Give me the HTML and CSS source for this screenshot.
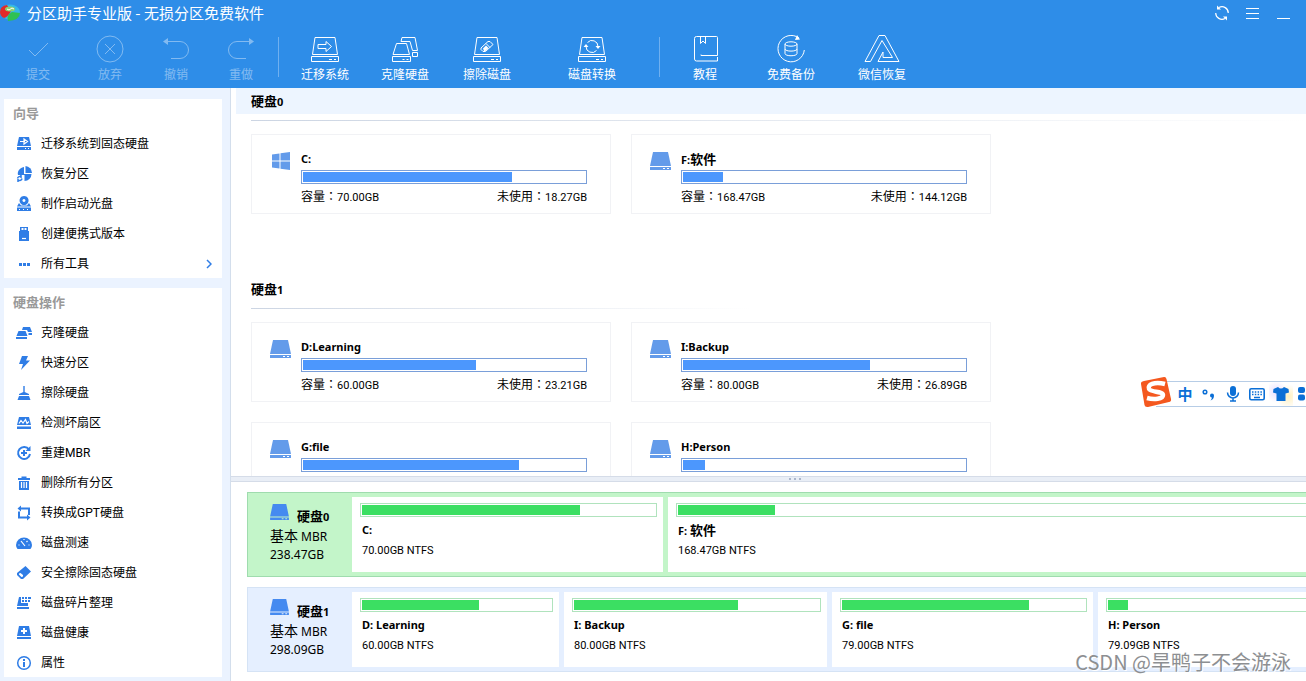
FILE: index.html
```html
<!DOCTYPE html>
<html lang="zh-CN">
<head>
<meta charset="utf-8">
<title>分区助手专业版 - 无损分区免费软件</title>
<link rel="stylesheet" href="styles.css">
</head>
<body>
<svg class="sprite" aria-hidden="true">
  <symbol id="drive" viewBox="0 0 21 19"><path d="M3 0h15l3 14H0z"/><path fill-rule="evenodd" d="M0 15h21v3H0zM13 16v1h2v-1zM17 16v1h2v-1z"/></symbol>
  <symbol id="drive-line" viewBox="0 0 28 28"><path d="M4 2.500H24L26.500 19.500H1.500zM.5 21.500H27.500V26.500H.5zM18 24.500h3M23 24.500h2"/></symbol>
</svg>

<div class="app">
  <header class="top">
    <div class="titlebar">
      <svg class="logo" width="20" height="18" viewBox="0 0 20 18"><ellipse cx="10" cy="8" rx="10" ry="7.500" fill="#35b8e8"/><path d="M0 8Q0 2 7 1L11 7Q8 13 4 14 0 12 0 8z" fill="#e02a2a"/><path d="M8 17Q6 11 12 8L20 9Q20 16 8 17z" fill="#2fc152"/><ellipse cx="10" cy="5" rx="5" ry="2.500" fill="#8fd16c"/><path d="M7 5l2 1 3-2 2 1" stroke="#fff" fill="none"/></svg>
      <h1>分区助手专业版 - 无损分区免费软件</h1>
      <div class="winctl">
        <button type="button" aria-label="刷新"><svg width="16" height="16" viewBox="0 0 16 16"><path d="M5 2.500A6.300 6.300 0 0 1 14.300 8M11 13.500A6.300 6.300 0 0 1 1.700 8" fill="none" stroke="#fff" stroke-width="1.200"/><path d="M3 .5v4h4zM13 15.500v-4H9z" fill="#fff"/></svg></button>
        <button type="button" aria-label="菜单"><svg width="14" height="14" viewBox="0 0 14 14"><path d="M0 2.500h13M0 7.500h13M0 12.500h13" stroke="#fff"/></svg></button>
        <button type="button" aria-label="最小化"><svg width="14" height="14" viewBox="0 0 14 14"><path d="M0 12.500h13" stroke="#fff"/></svg></button>
      </div>
    </div>
    <nav class="toolbar">
      <button type="button" disabled><svg viewBox="0 0 28 28"><path d="M5 15l6 6L24 8"/></svg>提交</button>
      <button type="button" disabled><svg viewBox="0 0 28 28"><circle cx="14" cy="14" r="13"/><path d="M9 9l10 10M19 9L9 19"/></svg>放弃</button>
      <button type="button" disabled><svg viewBox="0 0 28 28"><path d="M2 6.500H18a8.500 8.500 0 0 1 0 17H9"/><path class="solid" d="M1 6.500L6 3v7z"/></svg>撤销</button>
      <button type="button" disabled><svg viewBox="0 0 28 28"><path d="M26 6.500H10a8.500 8.500 0 0 0 0 17h9"/><path class="solid" d="M27 6.500L22 3v7z"/></svg>重做</button>
      <i class="sep"></i>
      <button type="button"><svg viewBox="0 0 28 28"><use href="#drive-line"/><path d="M7 9.500h8v-3l5.500 5-5.500 5v-3H7z"/></svg>迁移系统</button>
      <button type="button"><svg viewBox="0 0 28 28"><path d="M5.500 8.500H15.500L18.500 19.500H2zM1.500 21.500H19.500V26.500H1.500zM11.500 24.500h2M15.500 24.500h2M10 6.500L11 2.500H24L26.500 15.500H21.500L19 6.500H10M21.500 17.500h5v4h-5z"/></svg>克隆硬盘</button>
      <button type="button"><svg viewBox="0 0 28 28"><use href="#drive-line"/><path d="M8 13l7-6.500h2l3 3-7.500 7H10l-2-2zM13 8.500l4 4"/><path class="solid" d="M10 13.500l3-3 2.500 2.500-3 3H11z"/></svg>擦除磁盘</button>
      <button type="button"><svg viewBox="0 0 28 28"><use href="#drive-line"/><path d="M9.500 7.500a6 6 0 0 1 10.500 4M18.500 15.500a6 6 0 0 1-10.500-4"/><path class="solid" d="M17.500 11h5L20 14zM5.500 12h5L8 9z"/></svg>磁盘转换</button>
      <i class="sep"></i>
      <button type="button"><svg viewBox="0 0 28 28"><path d="M26.500 20.500V2.500a1 1 0 0 0-1-1H5.500a2 2 0 0 0-2 2V24a2 2 0 0 0 2 2H26.500V22M26.500 20.500H10v-1M9.500 1.500v7l2.500-2.500 2.500 2.500v-7"/></svg>教程</button>
      <button type="button"><svg viewBox="0 0 28 28"><path d="M22 3A13.200 13.200 0 1 0 27.300 15"/><path class="solid" d="M20 0l3 4.500-5 .5z"/><ellipse cx="14" cy="9" rx="6" ry="2.200"/><path d="M8 9v9.500c0 3 12 3 12 0V9M8 14c0 2.800 12 2.800 12 0"/></svg>免费备份</button>
      <button type="button"><svg class="wide" viewBox="0 0 36 28"><path d="M1 26.500L15 .5H21L35 26.500H14L19 17v5.500H28.500L18 5.500 6.500 26.500H1"/></svg>微信恢复</button>
    </nav>
  </header>

  <div class="body">
    <aside class="side">
      <section class="group">
        <h2>向导</h2>
        <ul>
          <li><button type="button"><svg viewBox="0 0 16 16"><path d="M3 1h10l2 9H1z"/><path d="M1 11h14v3H1z"/><path d="M4 5.500h5M8 3l3.500 2.500L8 8z" class="cut"/><path d="M9 12.500h1M12 12.500h1" class="cut"/></svg>迁移系统到固态硬盘</button></li>
          <li><button type="button"><svg viewBox="0 0 16 16"><path d="M8 1v7h7.500a7 7 0 0 1-7 7V9H2C1 6 3 2 8 1z"/><path d="M9.500 0A7 7 0 0 1 16 7H9.500z"/><path d="M1.500 12.500a2.500 2.500 0 0 1 4-1.500M6 12.500a2.500 2.500 0 0 1-4 1.500M5 9v3M2 16v-3" class="line"/></svg>恢复分区</button></li>
          <li><button type="button"><svg viewBox="0 0 16 16"><path fill-rule="evenodd" d="M8 0a4.500 4.500 0 1 0 .1 0zM8 3a1.500 1.500 0 1 1-.1 0z"/><path d="M3 7l2 2.500h6L13 7l2 3.500H1zM1 11.500h14V15H1z"/><path d="M3 13.500h1M7 13.500h1M11 13.500h1" class="cut"/></svg>制作启动光盘</button></li>
          <li><button type="button"><svg viewBox="0 0 16 16"><path d="M3 5h10v10H3z"/><path fill-rule="evenodd" d="M4 1h8v4H4zM5.500 2v2h2V2zM8.500 2v2h2V2z"/><path d="M6 12.500h4" class="cut"/></svg>创建便携式版本</button></li>
          <li><button type="button"><svg viewBox="0 0 16 16"><path d="M3 7h3v3H3zM7 7h3v3H7zM11 7h3v3h-3z"/></svg>所有工具<svg class="chev" viewBox="0 0 6 10"><path d="M1 1l4 4-4 4" class="line"/></svg></button></li>
        </ul>
      </section>
      <section class="group">
        <h2>硬盘操作</h2>
        <ul>
          <li><button type="button"><svg viewBox="0 0 16 16"><path d="M2.500 6h7l2 5H.5zM0 12h11v2H0zM7 2h7l2 5h-4L11 5H6zM12.500 8H16v2h-3.500z"/></svg>克隆硬盘</button></li>
          <li><button type="button"><svg viewBox="0 0 16 16"><path d="M6 1h6l-2 4.500h4L5 15l2-6H3z"/></svg>快速分区</button></li>
          <li><button type="button"><svg viewBox="0 0 16 16"><path d="M7.300 1h1.400v6l4.300 2v1H3V9l4.300-2zM3 11h10l1.500 4h-13z"/></svg>擦除硬盘</button></li>
          <li><button type="button"><svg viewBox="0 0 16 16"><path d="M3 2h10l2 8H1zM1 11.500h14V14H1z"/><path d="M3 8.500l2-3L7 8l2.500-3.500 1.500 4 2-2" class="cut"/></svg>检测坏扇区</button></li>
          <li><button type="button"><svg viewBox="0 0 16 16"><path d="M13 4.500A6 6 0 1 0 14 9M8 5v6M5 8h6" class="line bold"/><path d="M14.500 1v5h-5z"/></svg>重建MBR</button></li>
          <li><button type="button"><svg viewBox="0 0 16 16"><path d="M2 3h3.500V1.500h5V3H14v2H2zM3 6h10v9H3z"/><path d="M5.500 7v6M8 7v6M10.500 7v6" class="cut"/></svg>删除所有分区</button></li>
          <li><button type="button"><svg viewBox="0 0 16 16"><path d="M4 3.500h9V10M3 6.500V12.500h8" class="line bold"/><path d="M1.500 3.500L5 .5v6zM14.500 12.500L11 9.500v6z"/></svg>转换成GPT硬盘</button></li>
          <li><button type="button"><svg viewBox="0 0 16 16"><path d="M0 10a8 7.500 0 0 1 16 0q0 2.500-1.500 4h-13Q0 12.500 0 10z"/><path d="M5 6l4 5M2.500 10h1M12.500 10h1M8 4v1M11.500 6l-1 1" class="cut"/></svg>磁盘测速</button></li>
          <li><button type="button"><svg viewBox="0 0 16 16"><path fill-rule="evenodd" d="M9.500 1L15 6.500 7 14H5L1 10V8zM3 8.500v1L5.500 12 7 11.500V10L4.500 8z"/></svg>安全擦除固态硬盘</button></li>
          <li><button type="button"><svg viewBox="0 0 16 16"><path d="M3 2h2v6h7v3H1zM1 12h12v2H1zM6 2h2v2H6zM9 2h2v2H9zM12 2h3v2h-3zM6 5h2v2H6zM9 5h2v2H9zM12 5h2v2h-2z"/></svg>磁盘碎片整理</button></li>
          <li><button type="button"><svg viewBox="0 0 16 16"><path d="M3 1h10l2 10H1zM1 12h14v2H1z"/><path d="M8 3v6M5 6h6" class="cut thick"/></svg>磁盘健康</button></li>
          <li><button type="button"><svg viewBox="0 0 16 16"><circle cx="8" cy="8" r="6.300" class="line"/><path d="M7 4h2v2H7zM7 7h2v5H7z"/></svg>属性</button></li>
        </ul>
      </section>
    </aside>

    <main class="main">
      <div class="volumes">
        <section class="disk">
          <h2 class="band"><span class="zh">硬盘</span>0</h2>
          <div class="rule"></div>
          <div class="cards">
            <article class="card">
              <svg class="ico" viewBox="0 0 21 19"><path d="M2 2.500L9.500 1.500V8.500H2zM10.500 1.300L20 0V8.500H10.500zM2 9.500H9.500V16.500L2 15.500zM10.500 9.500H20V18L10.500 16.700z"/></svg>
              <div class="info"><h3>C:</h3><div class="meter"><span style="width:74%"></span></div><p><span><span class="zh">容量：</span>70.00GB</span><span><span class="zh">未使用：</span>18.27GB</span></p></div>
            </article>
            <article class="card">
              <svg class="ico"><use href="#drive"/></svg>
              <div class="info"><h3>F:<span class="zh">软件</span></h3><div class="meter"><span style="width:14.200%"></span></div><p><span><span class="zh">容量：</span>168.47GB</span><span><span class="zh">未使用：</span>144.12GB</span></p></div>
            </article>
          </div>
        </section>
        <section class="disk">
          <h2 class="name"><span class="zh">硬盘</span>1</h2>
          <div class="rule short"></div>
          <div class="cards">
            <article class="card">
              <svg class="ico"><use href="#drive"/></svg>
              <div class="info"><h3>D:Learning</h3><div class="meter"><span style="width:61.300%"></span></div><p><span><span class="zh">容量：</span>60.00GB</span><span><span class="zh">未使用：</span>23.21GB</span></p></div>
            </article>
            <article class="card">
              <svg class="ico"><use href="#drive"/></svg>
              <div class="info"><h3>I:Backup</h3><div class="meter"><span style="width:66.400%"></span></div><p><span><span class="zh">容量：</span>80.00GB</span><span><span class="zh">未使用：</span>26.89GB</span></p></div>
            </article>
            <article class="card">
              <svg class="ico"><use href="#drive"/></svg>
              <div class="info"><h3>G:file</h3><div class="meter"><span style="width:76.700%"></span></div></div>
            </article>
            <article class="card">
              <svg class="ico"><use href="#drive"/></svg>
              <div class="info"><h3>H:Person</h3><div class="meter"><span style="width:7.800%"></span></div></div>
            </article>
          </div>
        </section>
      </div>

      <div class="splitter"><i></i><i></i><i></i></div>

      <div class="maps">
        <section class="map selected">
          <div class="head"><h3><svg><use href="#drive"/></svg><span><span class="zh">硬盘</span>0</span></h3><p><span class="zh">基本</span> MBR</p><p>238.47GB</p></div>
          <div class="part" style="flex-grow:297"><div class="meter green"><span style="width:74.400%"></span></div><h4>C:</h4><p>70.00GB NTFS</p></div>
          <div class="part" style="flex-grow:677"><div class="meter green"><span style="width:14.400%"></span></div><h4>F: <span class="zh">软件</span></h4><p>168.47GB NTFS</p></div>
        </section>
        <section class="map">
          <div class="head"><h3><svg><use href="#drive"/></svg><span><span class="zh">硬盘</span>1</span></h3><p><span class="zh">基本</span> MBR</p><p>298.09GB</p></div>
          <div class="part" style="flex-grow:193"><div class="meter green"><span style="width:61.900%"></span></div><h4>D: Learning</h4><p>60.00GB NTFS</p></div>
          <div class="part" style="flex-grow:249"><div class="meter green"><span style="width:66.900%"></span></div><h4>I: Backup</h4><p>80.00GB NTFS</p></div>
          <div class="part" style="flex-grow:247"><div class="meter green"><span style="width:77%"></span></div><h4>G: file</h4><p>79.00GB NTFS</p></div>
          <div class="part" style="flex-grow:247"><div class="meter green"><span style="width:8.200%"></span></div><h4>H: Person</h4><p>79.09GB NTFS</p></div>
        </section>
      </div>
    </main>
  </div>

  <div class="ime">
    <svg class="ime-logo" width="32" height="32" viewBox="0 0 32 32"><path d="M4 5L24 1q2-.3 2.500 2L31 23q.5 2.500-2 3L8 31q-3 .5-3.500-2L1 8Q.5 5.500 4 5z" fill="#f4581f"/><path d="M25 8C14 5 7 9 9 13c2 3.500 14 2 14 6 0 4-9 5-16 3" fill="none" stroke="#fff" stroke-width="4.500"/></svg>
    <button type="button">中</button>
    <button type="button" aria-label="标点"><svg width="16" height="16" viewBox="0 0 16 16"><circle cx="4" cy="6" r="1.800" fill="none" stroke="#0b6fd6" stroke-width="1.500"/><path d="M9 9.500a2 2 0 1 1 4 0q0 4-3.500 5 1.500-1.500 1.300-3Q9 11.500 9 9.500z"/></svg></button>
    <button type="button" aria-label="语音"><svg width="16" height="16" viewBox="0 0 16 16"><rect x="5" width="6" height="10" rx="3"/><path d="M2.500 6.500a5.500 5.500 0 0 0 11 0M8 12v3M5 15h6" fill="none" stroke="#0b6fd6" stroke-width="1.500"/></svg></button>
    <button type="button" aria-label="键盘"><svg width="16" height="16" viewBox="0 0 16 16"><rect x=".8" y="2.800" width="14.400" height="11" rx="1.500" fill="none" stroke="#0b6fd6" stroke-width="1.600"/><path d="M3 6h10M3 8.500h10" stroke="#0b6fd6" stroke-width="1.600" stroke-dasharray="1.500 1.300"/><path d="M5 11.500h6" stroke="#0b6fd6" stroke-width="1.500"/></svg></button>
    <button type="button" class="skin" aria-label="皮肤"><svg width="16" height="16" viewBox="0 0 16 16"><path d="M5 1q3 3 6 0l4.500 2L16 6.500l-3.500 1V15h-9V7.500L0 6.500.5 3z"/></svg></button>
    <button type="button" aria-label="工具箱"><svg width="16" height="16" viewBox="0 0 16 16"><rect y="1" width="7" height="6" rx="2"/><rect y="8.500" width="7" height="6" rx="2"/><rect x="9" y="1" width="7" height="6" rx="2"/></svg></button>
  </div>
  <div class="watermark">CSDN @旱鸭子不会游泳</div>
</div>
</body>
</html>
```
FILE: styles.css
```css
* { box-sizing: border-box; margin: 0; padding: 0; }
body {
  font: 11px/16px "Noto Sans", "Noto Sans CJK SC", sans-serif;
  color: #000;
  background: #fff;
}
button { font: inherit; color: inherit; background: none; border: 0; }
ul { list-style: none; }
h1, h2, h3, h4 { font-size: inherit; }
.sprite { display: none; }
.zh { font-family: "Noto Sans CJK TC", "Noto Sans CJK SC", sans-serif; font-size: 12px; -webkit-locale: "zh-Hant"; }
h2 .zh, h3 .zh, h4 .zh { font-family: "Noto Sans CJK SC", sans-serif; font-size: 13px; -webkit-locale: "zh-Hans"; }

.app { position: relative; display: flex; flex-direction: column; height: 100vh; overflow: hidden; }

/* header */
.top { flex: none; background: #2e8de8; color: #fff; }
.titlebar { display: flex; align-items: center; height: 26px; padding-right: 15px; }
.titlebar h1 { margin-left: 7px; font: 15px/24px "Noto Sans CJK SC", sans-serif; flex: 1; }
.winctl { display: flex; gap: 16px; }
.winctl button { display: flex; align-items: center; justify-content: center; width: 15px; height: 26px; }
.winctl svg { flex: none; }
.toolbar {
  display: grid;
  grid-template-columns: 72px 72px 60px 70px 5px 88px 72px 92px 118px 16px 76px 96px 86px;
  padding: 9px 0 6px 2px;
}
.toolbar button {
  display: flex; flex-direction: column; align-items: center; gap: 3px;
  font: 12px/16px "Noto Sans CJK SC", sans-serif; white-space: nowrap;
}
.toolbar button:disabled { opacity: .4; }
.toolbar svg { width: 28px; height: 28px; fill: none; stroke: #fff; stroke-width: 1; }
.toolbar svg.wide { width: 36px; }
.toolbar .solid { fill: #fff; stroke: none; }
.sep { justify-self: center; width: 1px; height: 40px; margin-top: 2px; background: #6fb0f0; }

/* sidebar */
.body { display: flex; flex: 1; min-height: 0; }
.side {
  flex: none; display: flex; flex-direction: column; gap: 10px;
  width: 231px; padding: 11px 8px 4px 4px;
  background: #ebf3ff; border-right: 1px solid #d3deec;
}
.group { background: #fff; }
.group h2 { padding: 4px 9px 5px; font: bold 13px/20px "Noto Sans CJK SC", sans-serif; color: #999; }
.group button {
  display: flex; align-items: center; gap: 9px; width: 100%; height: 30px; padding: 2px 10px 0 12px;
  font: 12px/16px Roboto, "Noto Sans CJK SC", sans-serif; text-align: left;
}
.group svg { flex: none; width: 16px; height: 16px; fill: #2f7de6; }
.group .line { fill: none; stroke: #2f7de6; stroke-width: 1.500; }
.group .bold { stroke-width: 2; }
.group .cut { fill: #fff; stroke: #fff; stroke-width: 1.200; }
.group .thick { stroke-width: 2; }
.group path.cut[d*="l"] { fill: none; }
.group svg.chev { width: 6px; height: 10px; margin-left: auto; }

/* volume cards */
.main { display: flex; flex-direction: column; flex: 1; min-width: 0; }
.volumes { flex: 1; min-height: 0; overflow: hidden; padding-left: 5px; }
.disk { padding-bottom: 62px; }
.disk h2 { height: 26px; padding-left: 15px; line-height: 26px; }
.band { background: #edf5ff; }
.rule { height: 1px; margin: 6px 0 13px 15px; background: linear-gradient(90deg, #ccd5e3, #fff); }
.rule.short { max-width: 500px; }
.cards { display: grid; grid-template-columns: repeat(auto-fill, 360px); gap: 20px; padding-left: 15px; }
.card {
  display: grid; grid-template-columns: 49px 1fr; align-items: start;
  min-height: 80px; padding: 16px 23px 8px 0; border: 1px solid #f1f2f5;
}
.ico { width: 21px; height: 19px; margin: 1px 0 0 18px; fill: #639bea; }
.info h3, .info p { height: 16px; }
.info p { display: flex; justify-content: space-between; margin-top: 4px; font-family: Roboto, sans-serif; }
.meter { height: 14px; margin-top: 3px; padding: 1px; border: 1px solid #7a9fd9; background: #fff; }
.meter span { display: block; height: 100%; background: #4c97fd; }

.splitter {
  flex: none; display: flex; justify-content: center; align-items: center; gap: 3px;
  height: 6px; padding-left: 53px; background: #e9eef6; border: solid #d5dce8; border-width: 1px 0;
}
.splitter i { width: 2px; height: 2px; background: #aab6cc; }

/* disk maps */
.maps { flex: none; display: flex; flex-direction: column; gap: 10px; padding: 10px 0 9px 16px; overflow: hidden; }
.map {
  display: flex; gap: 5px; width: calc(100% + 58px); padding: 4px;
  background: #e5efff; border: 1px solid #d5e3f5;
}
.map.selected { background: #c3f5c9; border-color: #9fdcae; }
.head { flex: none; width: 95px; padding: 7px 0 0 18px; font-size: 12px; line-height: 19px; white-space: nowrap; }
.head h3 { display: flex; gap: 8px; height: 22px; font-size: 11px; }
.head h3 span { line-height: 24px; }
.head svg { width: 19px; height: 17px; fill: #458af0; }
.head p { height: 19px; }
.head p .zh { font-size: 14px; line-height: 19px; }
.part { flex: 1 1 0; min-width: 0; height: 75px; padding: 6px 6px 0 8px; background: #fff; }
.meter.green { margin: 0; border-color: #b0e3bd; }
.meter.green span { background: #3bdf62; }
.part h4, .part p { height: 16px; margin: 5px 0 0 2px; }
.part p { font-family: Roboto, sans-serif; }

/* floating input bar and watermark */
.ime {
  position: absolute; top: 381px; right: 0; display: grid; grid-template-columns: repeat(5, 24px) 13px;
  width: 150px; height: 26px; padding-left: 17px; background: #fff; border: solid #b7cde6; border-width: 1px 0; overflow: visible;
}
.ime-logo { position: absolute; left: -16px; top: -6px; }
.ime button {
  display: flex; align-items: center; justify-content: center; overflow: hidden;
  font: bold 15px/24px "Noto Sans CJK SC", sans-serif; color: #0b6fd6;
}
.ime button:last-child { justify-content: flex-start; padding-left: 5px; }
.ime svg { flex: none; fill: #0b6fd6; }
.ime .skin { background: radial-gradient(circle at 30% 40%, #e8e0ff, transparent 50%), radial-gradient(circle at 80% 60%, #fff0c0, transparent 50%); }
.watermark {
  position: absolute; right: 15px; bottom: 5px; font: 20px/28px "Noto Sans CJK SC", sans-serif;
  color: #8d8f92; text-shadow: 1px 1px 0 #fff;
}
```
